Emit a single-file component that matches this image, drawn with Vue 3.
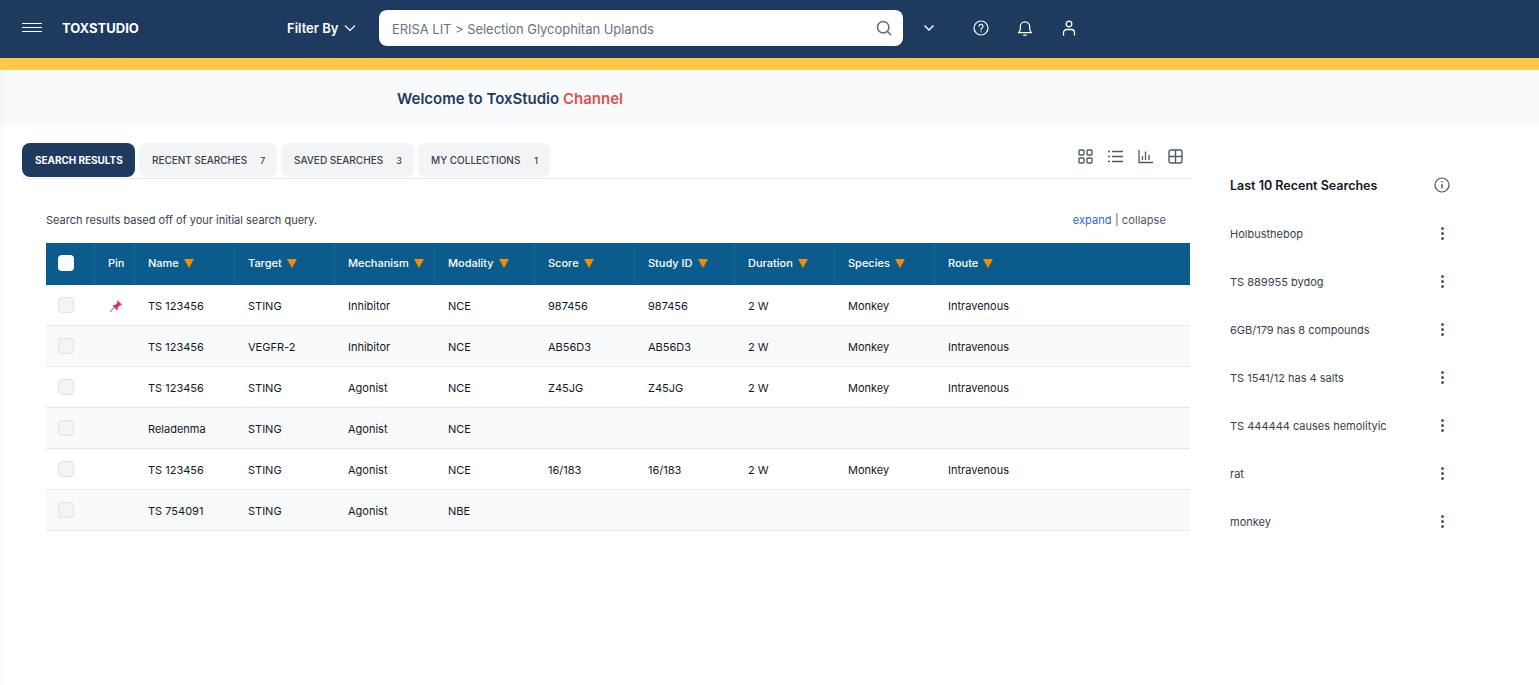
<script setup>
const cols = [
  { label: 'Name', key: 'name' },
  { label: 'Target', key: 'target' },
  { label: 'Mechanism', key: 'mech' },
  { label: 'Modality', key: 'mod' },
  { label: 'Score', key: 'score' },
  { label: 'Study ID', key: 'study' },
  { label: 'Duration', key: 'dur' },
  { label: 'Species', key: 'species' },
  { label: 'Route', key: 'route' }
]
const rows = [
  { pin: true, name: 'TS 123456', target: 'STING', mech: 'Inhibitor', mod: 'NCE', score: '987456', study: '987456', dur: '2 W', species: 'Monkey', route: 'Intravenous' },
  { name: 'TS 123456', target: 'VEGFR-2', mech: 'Inhibitor', mod: 'NCE', score: 'AB56D3', study: 'AB56D3', dur: '2 W', species: 'Monkey', route: 'Intravenous' },
  { name: 'TS 123456', target: 'STING', mech: 'Agonist', mod: 'NCE', score: 'Z45JG', study: 'Z45JG', dur: '2 W', species: 'Monkey', route: 'Intravenous' },
  { name: 'Reladenma', target: 'STING', mech: 'Agonist', mod: 'NCE' },
  { name: 'TS 123456', target: 'STING', mech: 'Agonist', mod: 'NCE', score: '16/183', study: '16/183', dur: '2 W', species: 'Monkey', route: 'Intravenous' },
  { name: 'TS 754091', target: 'STING', mech: 'Agonist', mod: 'NBE' }
]
const tabs = [
  { label: 'RECENT SEARCHES', n: 7, cls: 't-recent' },
  { label: 'SAVED SEARCHES', n: 3, cls: 't-saved' },
  { label: 'MY COLLECTIONS', n: 1, cls: 't-coll' }
]
const recent = ['Holbusthebop', 'TS 889955 bydog', '6GB/179 has 8 compounds', 'TS 1541/12 has 4 salts', 'TS 444444 causes hemolityic', 'rat', 'monkey']
</script>

<template>
  <div class="page">
    <header class="topbar">
      <div class="burger"><i></i><i></i><i></i></div>
      <div class="brand">TOXSTUDIO</div>
      <div class="filter">
        <span>Filter By</span>
        <svg width="12" height="8" viewBox="0 0 12 8" fill="none" stroke="#fff" stroke-width="1.100"><path d="M1 1.500 6 6.500 11 1.500"/></svg>
      </div>
      <div class="search">
        <span>ERISA LIT &gt; Selection Glycophitan Uplands</span>
        <svg width="16" height="16" viewBox="0 0 16 16" fill="none" stroke="#5f6b7a" stroke-width="1.500"><circle cx="7.200" cy="7.200" r="5.700"/><path d="M11.500 11.500 15 15"/></svg>
      </div>
      <svg class="ddown" width="12" height="8" viewBox="0 0 12 8" fill="none" stroke="#fff" stroke-width="1.400"><path d="M1.500 1.500 6 6 10.500 1.500"/></svg>
      <div class="actions">
        <svg width="16" height="16" viewBox="0 0 16 16" fill="none" stroke="#fff" stroke-width="1.200"><circle cx="8" cy="8" r="7"/><path d="M6 6.200a2 2 0 1 1 3 1.800c-.7.4-1 .8-1 1.600" stroke-linecap="round"/><path d="M8 11.300v.9"/></svg>
        <svg width="16" height="17" viewBox="0 0 16 17" fill="none" stroke="#fff" stroke-width="1.200"><path d="M1.500 12.700c1-.9 1.800-2 1.800-3.700V6.500a4.700 4.700 0 0 1 9.400 0V9c0 1.700.8 2.800 1.800 3.700z" stroke-linejoin="round"/><path d="M6.700 15.200h2.600" stroke-linecap="round"/></svg>
        <svg class="user" width="14" height="16" viewBox="0 0 14 16" fill="none" stroke="#fff" stroke-width="1.300"><circle cx="7" cy="4" r="2.800"/><path d="M1.500 15v-2.300A3.200 3.200 0 0 1 4.700 9.500h4.600a3.200 3.200 0 0 1 3.200 3.200V15" stroke-linecap="round"/></svg>
      </div>
    </header>
    <div class="stripe"></div>
    <div class="welcome">
      <h1>Welcome to ToxStudio <em>Channel</em></h1>
    </div>

    <div class="body">
      <main class="main">
        <div class="tabbar">
          <button class="tab active">SEARCH RESULTS</button>
          <button v-for="t in tabs" :key="t.label" class="tab" :class="t.cls"><span>{{ t.label }}</span><b>{{ t.n }}</b></button>
          <div class="views">
            <svg width="15" height="15" viewBox="0 0 15 15" fill="none" stroke="#4f5a68" stroke-width="1.400"><rect x="1" y="1" width="5" height="5" rx="1"/><rect x="9" y="1" width="5" height="5" rx="1"/><rect x="1" y="9" width="5" height="5" rx="1"/><rect x="9" y="9" width="5" height="5" rx="1"/></svg>
            <svg width="15" height="15" viewBox="0 0 15 15" fill="none" stroke="#4f5a68" stroke-width="1.400"><path d="M4 2.500H15M4 7.500H15M4 12.500H15"/><path d="M0 2.500h2M0 7.500h2M0 12.500h2"/></svg>
            <svg width="15" height="15" viewBox="0 0 15 15" fill="none" stroke="#4f5a68" stroke-width="1.300"><path d="M1 1v12.500h14"/><path d="M4.500 11V7M7.500 11V2.500M11 11V6"/></svg>
            <svg width="15" height="15" viewBox="0 0 15 15" fill="none" stroke="#4f5a68" stroke-width="1.400"><rect x="1" y="1" width="13" height="13" rx="2"/><path d="M1 7.500h13M7.500 1v13"/></svg>
          </div>
        </div>

        <div class="content">
          <div class="note">
            <span>Search results based off of your initial search query.</span>
            <span class="toggle"><a>expand</a> | collapse</span>
          </div>
          <div class="grid head">
            <div class="cell check"><span class="box white"></span></div>
            <div class="cell pin">Pin</div>
            <div v-for="c in cols" :key="c.key" class="cell" :class="{ last: c.key === 'route' }">
              {{ c.label }}<i class="tri"></i>
            </div>
          </div>
          <div v-for="(r, i) in rows" :key="i" class="grid row" :class="{ odd: i % 2 === 1 }">
            <div class="cell check"><span class="box"></span></div>
            <div class="cell pin">
              <svg v-if="r.pin" width="14" height="14" viewBox="0 0 14 14"><path d="M1 13 5 8.500" stroke="#9aa0a8" stroke-width="1.300" fill="none"/><path d="M8.300 1 13 5.700l-1 .9-1-.3-2.300 2.300c.3 1.100 0 2-.7 2.700L3.400 6.700c.7-.7 1.700-1 2.800-.7L8.500 3.700l-.2-1z" fill="#dc2f5f"/></svg>
            </div>
            <div v-for="c in cols" :key="c.key" class="cell">{{ r[c.key] }}</div>
          </div>
        </div>
      </main>

      <aside class="side">
        <div class="side-head">
          <span>Last 10 Recent Searches</span>
          <svg width="16" height="16" viewBox="0 0 16 16" fill="none" stroke="#4a5565" stroke-width="1.200"><circle cx="8" cy="8" r="7"/><path d="M8 7.200v4" stroke-width="1.500"/><path d="M8 4.300v1.300" stroke-width="1.500"/></svg>
        </div>
        <div v-for="s in recent" :key="s" class="side-item">
          <span class="side-text">{{ s }}</span>
          <span class="dots"><i></i><i></i><i></i></span>
        </div>
      </aside>
    </div>
    <div class="edge"></div>
  </div>
</template>

<style>
html, body { margin: 0; background: #fff; }
</style>

<style scoped>
.page { width: 1539px; height: 685px; overflow: hidden; font-family: Inter, "Liberation Sans", sans-serif; background: #fff; color: #111827; position: relative; }
.edge { position: absolute; left: 0; top: 70px; bottom: 0; width: 10px; background: linear-gradient(90deg, rgba(0, 0, 0, .025), rgba(0, 0, 0, 0)); pointer-events: none; }
.topbar { height: 58px; box-sizing: border-box; padding-bottom: 2px; background: #1e3a5f; display: flex; align-items: center; color: #fff; }
.burger { width: 20px; margin-left: 22px; margin-bottom: 1px; display: flex; flex-direction: column; gap: 2.500px; }
.burger i { display: block; height: 1.500px; background: #fff; }
.brand { margin-left: 20px; width: 225px; font-size: 13px; font-weight: 700; }
.filter { display: flex; align-items: center; gap: 6px; width: 92px; font-size: 13px; font-weight: 600; }
.search { width: 524px; height: 36px; border-radius: 8px; background: #fff; color: #6b7280; font-size: 13px; display: flex; align-items: center; justify-content: space-between; padding: 0 11px 0 13px; box-sizing: border-box; }
.search span { margin-top: 2px; letter-spacing: -.05px; }
.ddown { margin-left: 20px; }
.actions { display: flex; align-items: center; gap: 28px; margin-left: 38px; }
.actions .user { margin-left: 1px; }
.stripe { height: 12px; background: #ffc845; }
.welcome { height: 56px; background: #f9fafb; display: flex; align-items: center; padding-left: 397px; }
.welcome h1 { margin: 0; font-size: 15px; font-weight: 600; color: #1e3a5f; }
.welcome em { font-style: normal; color: #e0524d; }
.body { display: flex; }
.main { width: 1190px; padding-left: 22px; box-sizing: border-box; margin-top: 17px; }
.tabbar { display: flex; gap: 4px; height: 35px; border-bottom: 1px solid #e5e7eb; align-items: flex-start; }
.tab { height: 34px; border: 0; border-radius: 8px; background: #f3f4f6; color: #374151; font: 500 10px Inter, "Liberation Sans", sans-serif; padding: 0 12px 0 13px; display: flex; align-items: center; justify-content: space-between; box-sizing: border-box; }
.tab b { font-weight: 500; font-size: 9px; }
.tab.active { width: 113px; background: #1e3a5f; color: #fff; font-weight: 700; padding: 0 0 0 13px; letter-spacing: -.05px; }
.t-recent { width: 138px; letter-spacing: -.05px; }
.t-saved { width: 133px; }
.t-coll { width: 132px; }
.views { margin-left: auto; display: flex; gap: 15px; height: 27px; align-items: center; margin-right: 7px; }
.content { padding-left: 24px; }
.note { display: flex; justify-content: space-between; padding: 0 24px 0 0; margin-top: 34px; height: 30px; font-size: 11px; color: #374151; line-height: 14px; }
.toggle { color: #4b5563; letter-spacing: .1px; }
.toggle a { color: #2563eb; }
.grid { display: grid; grid-template-columns: 49px 40px repeat(8, 100px) 1fr; align-items: stretch; }
.head { height: 42px; background: #0b5c8c; color: #fff; font-size: 11px; font-weight: 500; }
.head .cell { border-right: 1px solid #1d6a98; padding-bottom: 2px; }
.head .cell.last { border-right: 0; }
.row { height: 41px; box-sizing: border-box; border-bottom: 1px solid #e5e7eb; font-size: 11px; color: #111827; }
.row .cell { padding-top: 2px; }
.row .cell.check { padding-top: 0; }
.row.odd { background: #f9fafb; }
.cell { display: flex; align-items: center; padding-left: 13px; box-sizing: border-box; }
.cell.check { padding-left: 12px; }
.box { width: 16px; height: 16px; border-radius: 4px; background: #f3f4f6; border: 1px solid #e0e2e6; box-sizing: border-box; }
.box.white { background: #fff; border: 0; }
.row .pin svg { margin-left: 1px; }
.tri { width: 0; height: 0; margin-left: 5px; border-left: 5.500px solid transparent; border-right: 5.500px solid transparent; border-top: 9px solid #f58a07; }
.side { width: 349px; padding-left: 40px; box-sizing: border-box; }
.side-head { display: flex; align-items: center; justify-content: space-between; width: 220px; margin-top: 50px; height: 18px; font-size: 12.500px; font-weight: 600; color: #111827; }
.side-item { display: flex; align-items: center; justify-content: space-between; width: 214px; height: 48px; font-size: 11px; color: #374151; }
.side-text { margin-top: 2px; }
.side-head + .side-item { margin-top: 15px; }
.dots { display: flex; flex-direction: column; gap: 2px; }
.dots i { width: 3px; height: 3px; border-radius: 50%; background: #4b5563; }
</style>
